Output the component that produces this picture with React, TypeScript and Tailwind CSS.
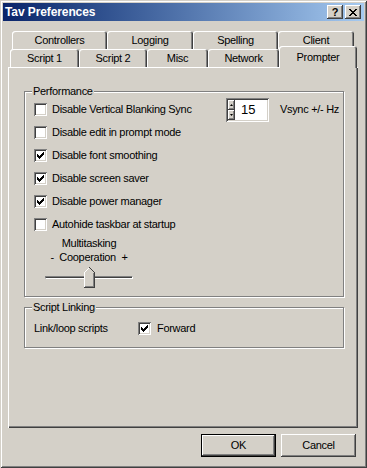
import React from "react";

const raised =
  "shadow-[inset_-1px_-1px_#404040,inset_1px_1px_#ffffff,inset_-2px_-2px_#808080,inset_2px_2px_#d4d0c8]";
const sunken =
  "shadow-[inset_1px_1px_#808080,inset_-1px_-1px_#ffffff,inset_2px_2px_#404040,inset_-2px_-2px_#d4d0c8]";
const tabEdge =
  "shadow-[inset_1px_1px_#ffffff,inset_-1px_0_#404040,inset_-2px_0_#808080]";
const etched =
  "border border-[#808080] shadow-[inset_1px_1px_#ffffff,1px_1px_#ffffff]";

function CheckMark() {
  const cols = [2, 3, 4, 3, 2, 1, 0];
  return (
    <svg width="7" height="7" viewBox="0 0 7 7" shapeRendering="crispEdges">
      {cols.map((y, x) => (
        <rect key={x} x={x} y={y} width="1" height="3" fill="#000" />
      ))}
    </svg>
  );
}

function Checkbox({ checked }: { checked?: boolean }) {
  return (
    <span
      className={`flex h-[13px] w-[13px] shrink-0 items-center justify-center bg-white ${sunken}`}
    >
      {checked && <CheckMark />}
    </span>
  );
}

function CheckRow({ label, checked }: { label: string; checked?: boolean }) {
  return (
    <div className="flex h-[23px] items-center gap-[5px] pl-[9px]">
      <Checkbox checked={checked} />
      <span>{label}</span>
    </div>
  );
}

function Tab({
  label,
  width,
  selected,
}: {
  label: string;
  width: string;
  selected?: boolean;
}) {
  return (
    <div
      className={`flex items-center justify-center rounded-t-[3px] bg-[#d4d0c8] ${tabEdge} ${width} ${
        selected ? "relative z-10 mb-[-1px] h-[22px]" : "h-[18px]"
      }`}
    >
      {label}
    </div>
  );
}

function CloseGlyph() {
  const rows = [
    [0, 1, 6, 7],
    [1, 2, 5, 6],
    [2, 3, 4, 5],
    [3, 4],
    [2, 3, 4, 5],
    [1, 2, 5, 6],
    [0, 1, 6, 7],
  ];
  return (
    <svg width="8" height="7" viewBox="0 0 8 7" shapeRendering="crispEdges">
      {rows.map((xs, y) =>
        xs.map((x) => (
          <rect key={`${x}-${y}`} x={x} y={y} width="1" height="1" fill="#000" />
        ))
      )}
    </svg>
  );
}

function SliderThumb() {
  return (
    <svg width="11" height="21" viewBox="0 0 11 21" shapeRendering="crispEdges">
      <polygon points="0,5 5,0 10,5 10,20 0,20" fill="#d4d0c8" />
      <polyline points="0.5,20 0.5,5.5 5.5,0.5" fill="none" stroke="#fff" />
      <polyline points="5.5,0.5 10.5,5.5 10.5,20.5 0,20.5" fill="none" stroke="#404040" />
      <polyline points="9.5,6 9.5,19.5 1,19.5" fill="none" stroke="#808080" />
    </svg>
  );
}

export default function App() {
  return (
    <div
      className={`flex h-[468px] w-[367px] flex-col bg-[#d4d0c8] p-[3px] font-['Liberation_Sans',Arial,sans-serif] text-[11px] leading-[13px] tracking-[-0.3px] text-black shadow-[inset_1px_1px_#d4d0c8,inset_-1px_-1px_#404040,inset_2px_2px_#ffffff,inset_-2px_-2px_#808080]`}
    >
      {/* title bar */}
      <div className="flex h-[18px] items-center bg-linear-to-r from-[#0a246a] to-[#a6caf0] pl-[2px] pr-[3px]">
        <span className="text-[12px] font-bold tracking-[-0.1px] text-white">
          Tav Preferences
        </span>
        <div className="ml-auto flex gap-[2px]">
          <div
            className={`flex h-[14px] w-[16px] items-center justify-center bg-[#d4d0c8] text-[11px] font-bold leading-none ${raised}`}
          >
            ?
          </div>
          <div
            className={`flex h-[14px] w-[16px] items-center justify-center bg-[#d4d0c8] ${raised}`}
          >
            <CloseGlyph />
          </div>
        </div>
      </div>

      {/* tabs */}
      <div className="ml-[9px] mt-[10px] flex h-[18px]">
        <Tab label="Controllers" width="w-[95px]" />
        <Tab label="Logging" width="w-[86px]" />
        <Tab label="Spelling" width="w-[85px]" />
        <Tab label="Client" width="w-[76px]" />
      </div>
      <div className="ml-[7px] mt-[-3px] flex h-[21px] items-end">
        <Tab label="Script 1" width="w-[69px]" />
        <Tab label="Script 2" width="w-[68px]" />
        <Tab label="Misc" width="w-[61px]" />
        <Tab label="Network" width="w-[71px]" />
        <Tab label="Prompter" width="w-[78px]" selected />
      </div>

      {/* panel */}
      <div className="ml-[5px] h-[361px] w-[350px] pl-[16px] pt-[18px] shadow-[inset_1px_1px_#ffffff,inset_-1px_-1px_#404040,inset_-2px_-2px_#808080]">
        <fieldset className={`w-[320px] pb-[8px] ${etched}`}>
          <legend className="ml-[7px] bg-[#d4d0c8] px-[1px]">Performance</legend>
          <div className="flex h-[23px] items-center pr-[4px]">
            <div className="flex items-center gap-[5px] pl-[9px]">
              <Checkbox />
              <span>Disable Vertical Blanking Sync</span>
            </div>
            <div className="ml-auto flex items-center gap-[11px]">
              <div className={`flex h-[24px] w-[43px] bg-white p-[2px] ${sunken}`}>
                <div className="flex w-[7px] flex-col">
                  <div className={`flex flex-1 items-center justify-center bg-[#d4d0c8] ${raised}`}>
                    <svg width="3" height="2" viewBox="0 0 3 2">
                      <polygon points="1.5,0 3,2 0,2" fill="#000" />
                    </svg>
                  </div>
                  <div className={`flex flex-1 items-center justify-center bg-[#d4d0c8] ${raised}`}>
                    <svg width="3" height="2" viewBox="0 0 3 2">
                      <polygon points="0,0 3,0 1.5,2" fill="#000" />
                    </svg>
                  </div>
                </div>
                <span className="self-center pl-[6px] text-[13px] tracking-normal">15</span>
              </div>
              <span>Vsync +/- Hz</span>
            </div>
          </div>
          <CheckRow label="Disable edit in prompt mode" />
          <CheckRow label="Disable font smoothing" checked />
          <CheckRow label="Disable screen saver" checked />
          <CheckRow label="Disable power manager" checked />
          <CheckRow label="Autohide taskbar at startup" />

          <div className="ml-[20px] flex w-[88px] flex-col items-center">
            <span className="leading-[14px]">Multitasking</span>
            <span className="whitespace-pre leading-[14px]">{"-  Cooperation  +"}</span>
            <div className="relative mt-[3px] h-[21px] w-[88px]">
              <div className="absolute left-0 right-0 top-[9px] h-[3px] border-b border-r border-white border-t border-t-[#808080] border-l border-l-[#808080] bg-[#404040]" />
              <div className="absolute left-[39px] top-0">
                <SliderThumb />
              </div>
            </div>
          </div>
        </fieldset>

        <fieldset className={`mt-[4px] w-[320px] pb-[5px] ${etched}`}>
          <legend className="ml-[7px] bg-[#d4d0c8] px-[1px]">Script Linking</legend>
          <div className="flex h-[28px] items-center pl-[9px]">
            <span className="w-[104px]">Link/loop scripts</span>
            <Checkbox checked />
            <span className="ml-[6px]">Forward</span>
          </div>
        </fieldset>
      </div>

      {/* buttons */}
      <div className="mt-[6px] flex justify-end gap-[5px] pr-[8px]">
        <button
          className={`flex h-[23px] w-[75px] items-center justify-center border border-black bg-[#d4d0c8] ${raised}`}
        >
          OK
        </button>
        <button
          className={`flex h-[23px] w-[75px] items-center justify-center bg-[#d4d0c8] ${raised}`}
        >
          Cancel
        </button>
      </div>
    </div>
  );
}
